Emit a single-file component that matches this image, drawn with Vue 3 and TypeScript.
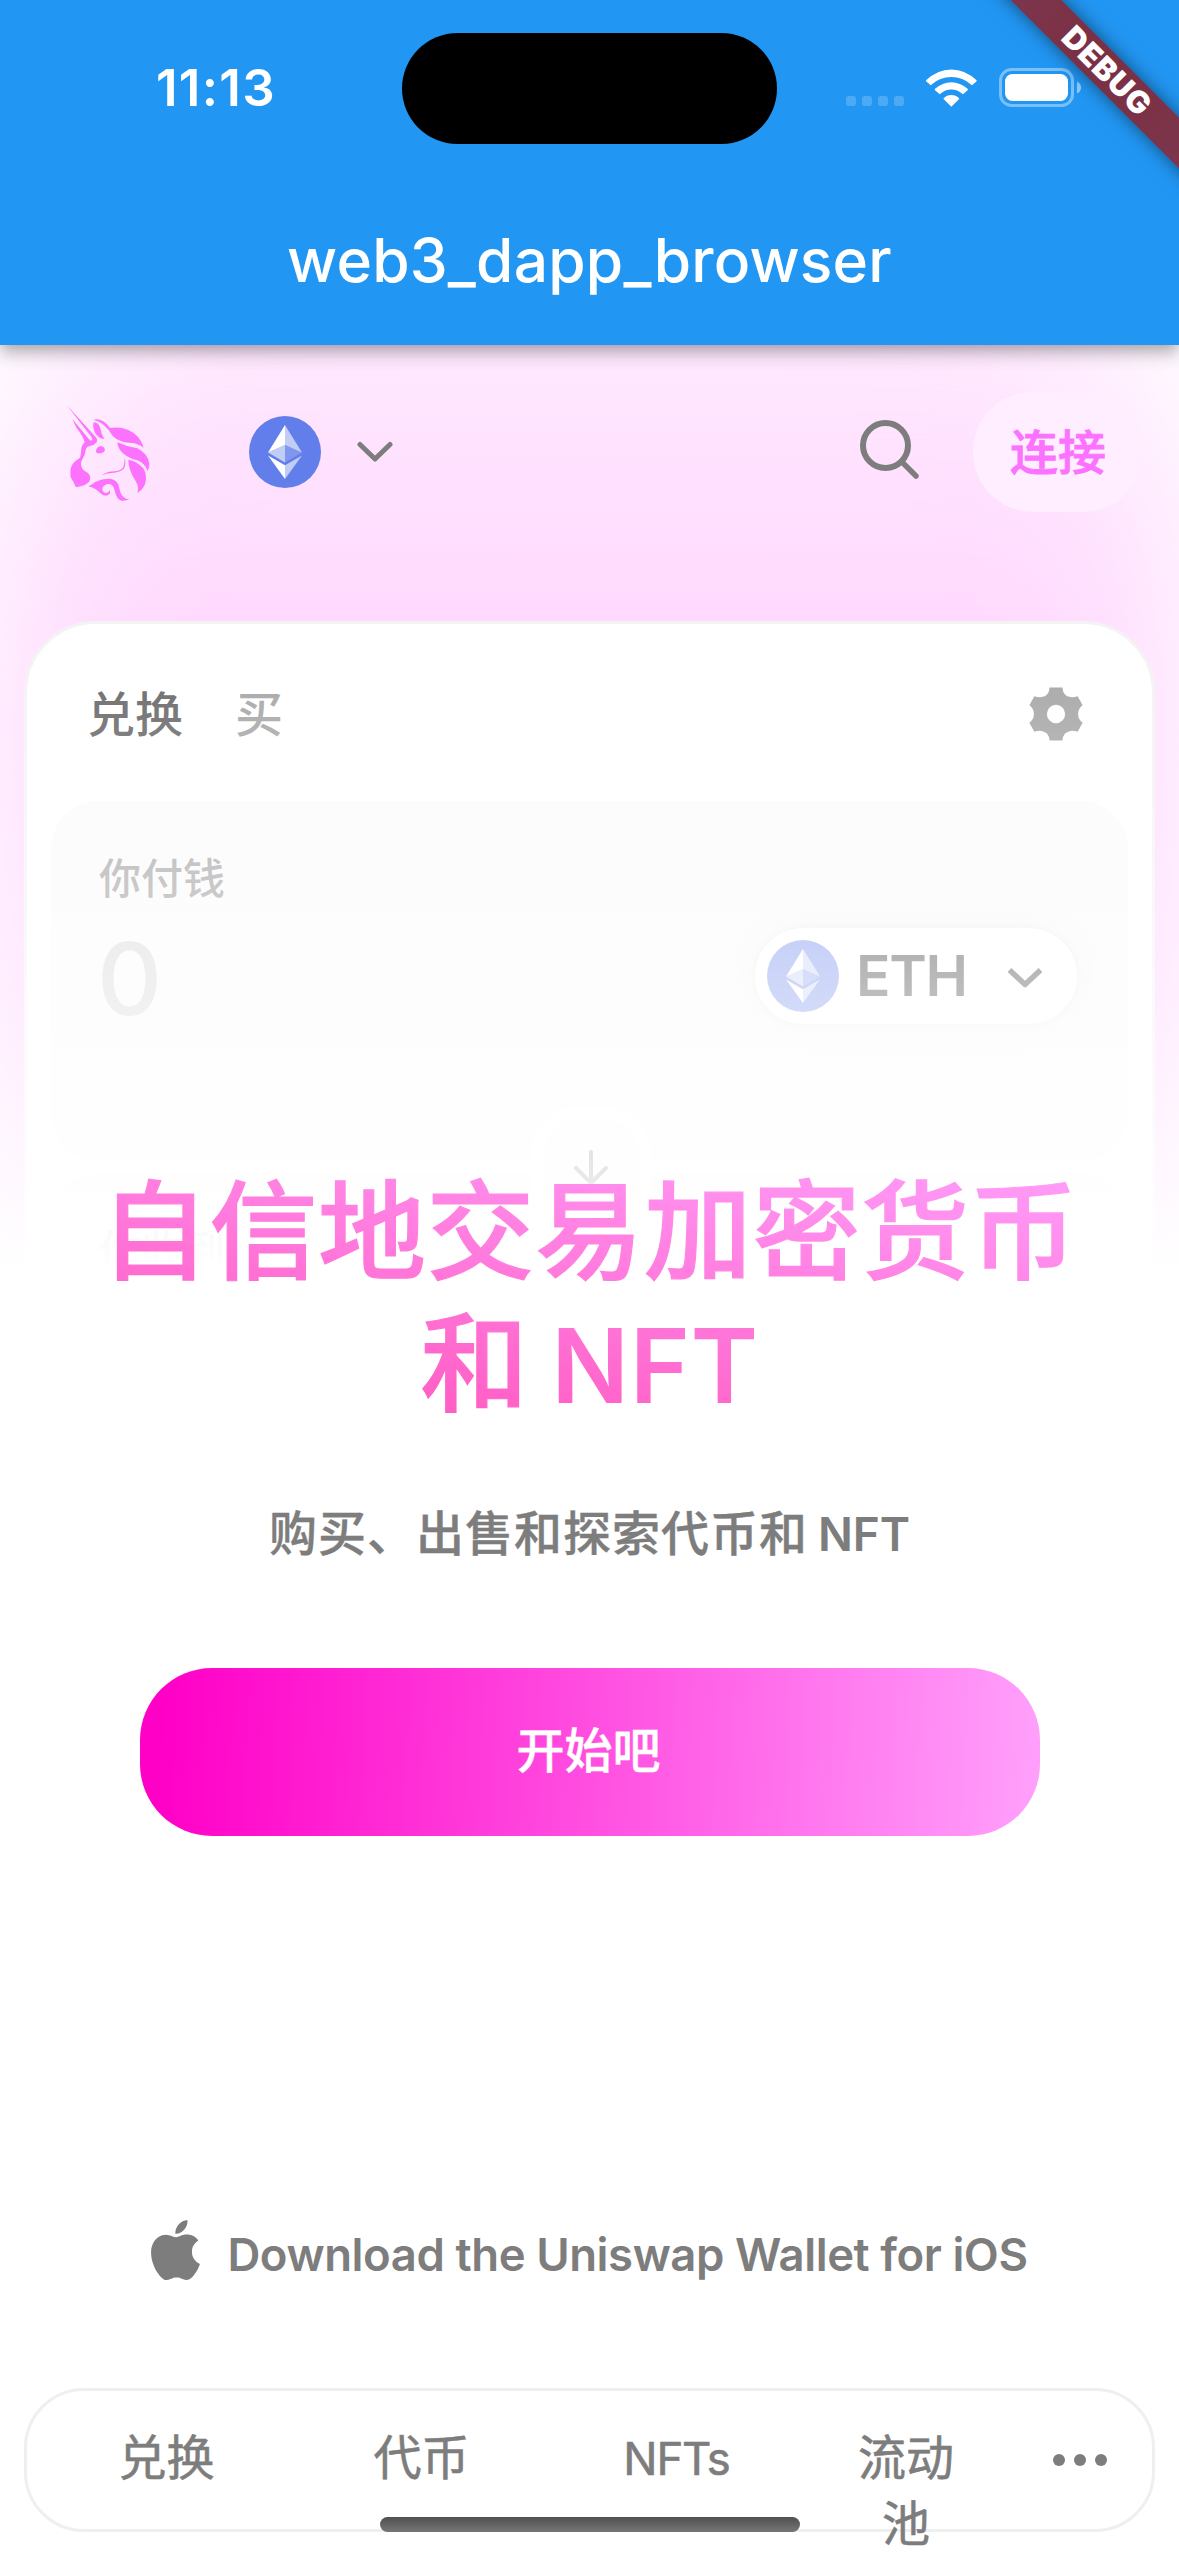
<script setup lang="ts">
interface TabItem {
  label: string
  kind: 'wide' | 'latin' | 'narrow'
}

const tabs: TabItem[] = [
  { label: '兑换', kind: 'wide' },
  { label: '代币', kind: 'wide' },
  { label: 'NFTs', kind: 'latin' },
  { label: '流动池', kind: 'narrow' },
]
const signalDots = [0, 1, 2, 3]
</script>

<template>
  <div class="screen">
    <header class="appbar">
      <div class="status">
        <div class="time">11:13</div>
        <div class="island"></div>
        <div class="indicators">
          <div class="signal"><i v-for="d in signalDots" :key="d"></i></div>
          <svg class="wifi" viewBox="379 206 152 113" fill="#fff">
            <path d="M380 239Q413 207 454.500 207Q496 207 529 239Q531 241 529 243L518 253Q516 255 514 253Q489 230 454.500 230Q420 230 395 253Q393 255 391 253L380 243Q378 241 380 239Z" />
            <path d="M406 265Q428 245 454.500 245Q481 245 503 265Q505 267 503 269L491 280Q489 282 487 280Q473 267 454.500 267Q436 267 422 280Q420 282 418 280L406 269Q404 267 406 265Z" />
            <path d="M432 292Q441 283 454.500 283Q468 283 477 292Q479 294 477 296L456 317Q454.500 319 453 317L432 296Q430 294 432 292Z" />
          </svg>
          <svg class="battery" viewBox="0 0 82 39">
            <rect x="1.500" y="1.500" width="72" height="36" rx="11" fill="none" stroke="#fff" stroke-opacity=".4" stroke-width="3" />
            <rect x="6" y="6" width="63" height="27" rx="7.500" fill="#fff" />
            <path d="M78 13.500Q82 15.500 82 19.500Q82 23.500 78 25.500Z" fill="#fff" fill-opacity=".5" />
          </svg>
        </div>
      </div>
      <h1 class="title">web3_dapp_browser</h1>
    </header>

    <main class="page">
      <div class="glow"></div>

      <nav class="topnav">
        <svg class="unicorn" viewBox="0 0 360 360" fill="#fc72ff">
          <path d="M50 15L139 113Q144 120 140 127Q133 136 122 137Q109 138 107 150Q106 165 97 178Q89 192 97 206Q104 214 114 219Q124 228 119 243Q110 257 78 262Q70 245 62 232Q58 207 68 192Q78 180 90 173Q94 160 94 145Q95 135 104 127Q99 108 80 84Q72 70 67 57L117 118Q121 123 126 121Q129 118 124 110Z" />
          <path d="M131 67Q146 66 151 85Q154 105 163 117Q145 115 135 98Q127 82 131 67Z" />
          <path d="M130 59Q158 53 180 84Q210 80 235 90Q270 105 281 143Q260 127 235 128Q200 124 186 105Q165 68 130 59Z" />
          <path d="M202 127Q230 140 262 145Q292 160 298 190Q299 203 293 213Q285 190 262 181Q225 172 210 150Q202 138 202 127Z" />
          <path d="M235 179Q260 183 280 205Q292 225 286 250Q280 268 262 279Q268 262 258 245Q235 210 235 179Z" />
          <path d="M138 152Q141 139 153 138Q163 140 165 150Q160 161 146 160Q138 160 138 152Z" />
          <path d="M223 173Q230 190 222 205Q212 218 185 219Q168 220 155 227Q170 214 195 214Q215 212 221 198Q225 188 223 173Z" />
          <path d="M115 259Q130 252 135 246Q155 236 180 236Q205 240 208 265Q212 290 228 296Q236 298 241 294Q232 304 215 302Q200 298 195 275Q190 250 175 252Q160 254 157 265Q156 277 168 279Q180 278 178 268Q186 282 170 287Q158 288 148 277Q135 264 115 259Z" />
        </svg>
        <svg class="eth" viewBox="0 0 72 72">
          <circle cx="36" cy="36" r="36" fill="#627eea" />
          <g fill="#fff">
            <path d="M36 9V29L53 36.500Z" fill-opacity=".602" />
            <path d="M36 9L19 36.500L36 29Z" />
            <path d="M36 49.200V63L53 39.500Z" fill-opacity=".602" />
            <path d="M36 63V49.200L19 39.500Z" />
            <path d="M36 46.500L53 36.500L36 29Z" fill-opacity=".2" />
            <path d="M19 36.500L36 46.500V29Z" fill-opacity=".602" />
          </g>
        </svg>
        <svg class="chev" viewBox="0 0 36 22" fill="none" stroke="#7d7d7d" stroke-width="5" stroke-linecap="round" stroke-linejoin="round">
          <path d="M3 3.500L18 18L33 3.500" />
        </svg>
        <svg class="search" viewBox="0 0 62 62" fill="none" stroke="#7d7d7d" stroke-linecap="round">
          <circle cx="26.500" cy="26.500" r="22.500" stroke-width="6" />
          <path d="M43 43L57 57" stroke-width="5.500" />
        </svg>
        <button class="connect">连接</button>
      </nav>

      <section class="card">
        <div class="card-tabs">
          <span class="on">兑换</span>
          <span class="off">买</span>
          <svg class="gear" viewBox="-71 -71 142 142" fill="#7d7d7d" fill-rule="evenodd">
            <path d="M-17 -70H17Q18 -46 42 -44Q50 -44 57 -47L70 -23Q58 -14 58 0Q58 14 70 23L57 47Q50 44 42 44Q18 46 17 70H-17Q-18 46 -42 44Q-50 44 -57 47L-70 23Q-58 14 -58 0Q-58 -14 -70 -23L-57 -47Q-50 -44 -42 -44Q-18 -46 -17 -70ZM24 0A24 24 0 1 0 -24 0A24 24 0 1 0 24 0Z" />
          </svg>
        </div>
        <div class="panel">
          <div class="label">你付钱</div>
          <div class="row">
            <div class="amount">0</div>
            <div class="token">
              <svg class="eth" viewBox="0 0 72 72">
                <circle cx="36" cy="36" r="36" fill="#627eea" />
                <g fill="#fff">
                  <path d="M36 9V29L53 36.500Z" fill-opacity=".602" />
                  <path d="M36 9L19 36.500L36 29Z" />
                  <path d="M36 49.200V63L53 39.500Z" fill-opacity=".602" />
                  <path d="M36 63V49.200L19 39.500Z" />
                  <path d="M36 46.500L53 36.500L36 29Z" fill-opacity=".2" />
                  <path d="M19 36.500L36 46.500V29Z" fill-opacity=".602" />
                </g>
              </svg>
              <span class="sym">ETH</span>
              <svg class="tchev" viewBox="0 0 36 22" fill="none" stroke="#222" stroke-width="5.500" stroke-linejoin="round">
                <path d="M2.500 3L18 17.500L33.500 3" />
              </svg>
            </div>
          </div>
        </div>
        <div class="panel second"><div class="label">你收到</div></div>
        <div class="swap">
          <svg viewBox="0 0 34 36" fill="none" stroke="#222" stroke-width="4" stroke-linecap="round" stroke-linejoin="round">
            <path d="M17 2V33M2 18L17 33L32 18" />
          </svg>
        </div>
      </section>

      <div class="fade"></div>

      <section class="hero">
        <h2 class="headline">自信地交易加密货币<br />和 <span>NFT</span></h2>
        <p class="sub">购买、出售和探索代币和 <span>NFT</span></p>
        <button class="start">开始吧</button>
        <div class="download">
          <svg viewBox="2.200 0 19.600 24" fill="#7d7d7d">
            <path d="M12.152 6.896c-.948 0-2.415-1.078-3.960-1.040-2.040.027-3.910 1.183-4.961 3.014-2.117 3.675-.546 9.103 1.519 12.090 1.013 1.454 2.208 3.090 3.792 3.039 1.520-.065 2.090-.987 3.935-.987 1.831 0 2.350.987 3.960.948 1.637-.026 2.676-1.480 3.676-2.948 1.156-1.688 1.636-3.325 1.662-3.415-.039-.013-3.182-1.221-3.220-4.857-.026-3.040 2.480-4.494 2.597-4.559-1.429-2.090-3.623-2.324-4.390-2.376-2-.156-3.675 1.090-4.610 1.090zM15.530 3.830c.843-1.012 1.400-2.427 1.245-3.830-1.207.052-2.662.805-3.532 1.818-.780.896-1.454 2.338-1.273 3.714 1.338.104 2.715-.688 3.559-1.701" />
          </svg>
          <span>Download the Uniswap Wallet for iOS</span>
        </div>
      </section>

      <nav class="tabbar">
        <a v-for="t in tabs" :key="t.label" :class="['tab', t.kind]"><span>{{ t.label }}</span></a>
        <svg class="more" viewBox="0 0 54 12" fill="#7d7d7d">
          <circle cx="6" cy="6" r="6" />
          <circle cx="27" cy="6" r="6" />
          <circle cx="48" cy="6" r="6" />
        </svg>
      </nav>
      <div class="home"></div>
    </main>

    <div class="debug"><span>DEBUG</span></div>
  </div>
</template>

<style>
body {
  background: #fff;
}
</style>

<style scoped>
.screen {
  position: relative;
  width: 1179px;
  height: 2556px;
  overflow: hidden;
  display: flex;
  flex-direction: column;
  background: #fff;
  font-family: Inter, "Noto Sans CJK SC", sans-serif;
  color: #7d7d7d;
}
button {
  border: 0;
  padding: 0;
  font: inherit;
}
svg {
  display: block;
  flex: none;
}
h1, h2, p {
  margin: 0;
}

.appbar {
  position: relative;
  z-index: 5;
  height: 345px;
  background: #2196f3;
  color: #fff;
  box-shadow: 0 6px 12px -3px rgba(0, 0, 0, .2), 0 12px 15px rgba(0, 0, 0, .12), 0 3px 24px rgba(0, 0, 0, .08);
}
.status {
  display: flex;
  align-items: center;
  height: 177px;
}
.time {
  width: 402px;
  box-sizing: border-box;
  padding-left: 156px;
  font-size: 51px;
  font-weight: 600;
  letter-spacing: 1.300px;
  line-height: 60px;
  margin-top: -1px;
}
.island {
  width: 375px;
  height: 111px;
  border-radius: 56px;
  background: #000;
}
.indicators {
  display: flex;
  align-items: center;
  margin-left: 69px;
  height: 40px;
  margin-top: -2px;
}
.signal {
  display: flex;
  gap: 6px;
  align-self: flex-end;
  margin-bottom: 2px;
}
.signal i {
  width: 10px;
  height: 10px;
  border-radius: 3px;
  background: rgba(255, 255, 255, .2);
}
.wifi {
  width: 51px;
  height: 38px;
  margin-left: 22px;
}
.battery {
  width: 82px;
  height: 39px;
  margin-left: 22px;
}
.title {
  text-align: center;
  font-size: 60.500px;
  font-weight: 500;
  letter-spacing: .200px;
  line-height: 72px;
  margin-top: 47px;
}

.page {
  position: relative;
  flex: 1;
  overflow: hidden;
}
.glow {
  position: absolute;
  left: 0;
  top: -160px;
  width: 1179px;
  height: 1500px;
  border-radius: 360px 360px 0 0;
  background: linear-gradient(rgba(255, 114, 252, .02) 0, rgba(255, 114, 252, .17) 175px, rgba(255, 114, 252, .29) 355px, rgba(255, 114, 252, .36) 415px, rgba(255, 114, 252, .58) 660px, rgba(255, 114, 252, .78) 860px, rgba(255, 114, 252, .85) 1060px);
  filter: blur(90px);
}
.topnav {
  position: relative;
  z-index: 3;
  display: flex;
  align-items: center;
  height: 216px;
  box-sizing: border-box;
  padding: 0 36px 2px 50px;
}
.unicorn {
  width: 120px;
  height: 120px;
  margin-top: 16px;
}
.eth {
  width: 72px;
  height: 72px;
}
.topnav .eth {
  margin-left: 79px;
}
.chev {
  width: 36px;
  height: 22px;
  margin-left: 36px;
}
.search {
  width: 62px;
  height: 62px;
  margin: -4px auto 0 466px;
}
.connect {
  width: 170px;
  height: 120px;
  border-radius: 60px;
  background: #feeeff;
  color: #fc72ff;
  font-size: 48px;
  font-weight: 500;
  line-height: 72px;
  padding-top: 2px;
  -webkit-text-stroke: .800px #fc72ff;
}

.card {
  position: relative;
  margin: 60px 24px 0;
  height: 1200px;
  box-sizing: border-box;
  padding: 0 24px;
  border: 3px solid #eee;
  border-radius: 72px;
  background: #fff;
}
.card-tabs {
  display: flex;
  align-items: center;
  height: 177px;
  padding: 0 45px 0 36px;
  font-size: 48px;
  font-weight: 500;
  line-height: 60px;
}
.on {
  color: #222;
  margin-top: 4px;
}
.off {
  margin: 4px 0 0 52px;
}
.gear {
  width: 54px;
  height: 54px;
  margin-left: auto;
  margin-top: 2px;
}
.panel {
  height: 360px;
  box-sizing: border-box;
  padding: 51px 51px 0 48px;
  border-radius: 48px;
  background: #f9f9f9;
}
.second {
  margin-top: 12px;
}
.label {
  font-size: 42px;
  font-weight: 500;
  line-height: 54px;
}
.row {
  display: flex;
  justify-content: space-between;
  align-items: center;
  margin-top: 13px;
}
.amount {
  margin: 5px 0 0 -2px;
  font-size: 101px;
  font-weight: 500;
  line-height: 108px;
  color: #cecece;
}
.token {
  display: flex;
  align-items: center;
  width: 322px;
  height: 96px;
  box-sizing: border-box;
  padding: 0 34px 0 12px;
  border-radius: 48px;
  background: #fff;
  color: #222;
  box-shadow: 0 0 36px rgba(34, 34, 34, .05), 0 0 6px rgba(34, 34, 34, .08);
}
.sym {
  margin-left: 17px;
  font-size: 57px;
  font-weight: 600;
  letter-spacing: -1.300px;
}
.tchev {
  width: 36px;
  height: 22px;
  margin-left: auto;
  margin-top: 5px;
}
.swap {
  position: absolute;
  left: 504px;
  top: 483px;
  width: 120px;
  height: 120px;
  box-sizing: border-box;
  border: 12px solid #fff;
  border-radius: 48px;
  background: #f9f9f9;
  display: flex;
  justify-content: center;
  padding-top: 31px;
}
.swap svg {
  width: 34px;
  height: 36px;
}
.fade {
  position: absolute;
  z-index: 2;
  inset: 0;
  background: linear-gradient(rgba(255, 255, 255, 0) 0, #fff 925px);
}

.hero {
  position: absolute;
  z-index: 3;
  left: 0;
  right: 0;
  top: 821px;
  display: flex;
  flex-direction: column;
  align-items: center;
}
.hero span {
  line-height: 1px;
}
.headline {
  width: 1035px;
  height: 264px;
  text-align: center;
  font-size: 108px;
  font-weight: 500;
  letter-spacing: .600px;
  word-spacing: -7px;
  line-height: 132px;
  background: linear-gradient(10deg, #ff4fb8 0%, #ff9ffb 100%);
  -webkit-background-clip: text;
  background-clip: text;
  color: transparent;
  -webkit-text-stroke: 1.200px transparent;
}
.headline span {
  font-size: 102.500px;
  font-weight: 600;
  -webkit-text-stroke: 0;
}
.sub {
  height: 72px;
  margin-top: 68px;
  font-size: 48px;
  font-weight: 500;
  letter-spacing: 1px;
  word-spacing: -4px;
  line-height: 72px;
  -webkit-text-stroke: .400px #7d7d7d;
}
.sub span {
  font-size: 46px;
  font-weight: 600;
  letter-spacing: -.100px;
  -webkit-text-stroke: 0;
}
.start {
  width: 900px;
  height: 168px;
  margin-top: 98px;
  padding: 0 2px 10px 0;
  border-radius: 72px;
  background: linear-gradient(93.060deg, #ff00c7 2.660%, #ff9ffb 98.990%);
  color: #fff;
  font-size: 48px;
  font-weight: 500;
  -webkit-text-stroke: .400px #fff;
}
.download {
  display: flex;
  align-items: center;
  margin-top: 384px;
  height: 60px;
  font-size: 45.500px;
  font-weight: 600;
  letter-spacing: -.430px;
  white-space: nowrap;
}
.download svg {
  width: 49px;
  height: 60px;
  margin-right: 27px;
}
.download span {
  margin-top: 8px;
}

.tabbar {
  position: absolute;
  z-index: 3;
  left: 24px;
  top: 2043px;
  width: 1131px;
  height: 144px;
  box-sizing: border-box;
  border: 3px solid #efefef;
  border-radius: 60px;
  background: #fff;
  display: flex;
  align-items: flex-start;
  padding: 34px 45px 0 12px;
  font-size: 48px;
  line-height: 66px;
  -webkit-text-stroke: .600px #7d7d7d;
}
.tab {
  width: 255px;
  text-align: center;
}
.latin {
  padding-top: 1px;
  font-size: 45.500px;
  letter-spacing: -1.200px;
}
.narrow {
  display: flex;
  justify-content: center;
  width: 204px;
}
.narrow span {
  width: 100px;
}
.more {
  width: 54px;
  height: 12px;
  margin: 29px 0 0 auto;
}
.home {
  position: absolute;
  z-index: 4;
  left: 380px;
  top: 2172px;
  width: 420px;
  height: 15px;
  border-radius: 8px;
  background: linear-gradient(#505050, #767676);
}

.debug {
  position: absolute;
  z-index: 6;
  left: 907px;
  top: 53px;
  width: 400px;
  height: 36px;
  transform: rotate(45deg);
  background: linear-gradient(90deg, #813a54, #7a3145 40%, #7a3145 60%, #813a54);
  box-shadow: 0 0 18px rgba(0, 0, 0, .5);
  color: #fff;
  text-align: center;
  font-size: 31px;
  font-weight: 900;
  letter-spacing: .800px;
  line-height: 36px;
}
</style>
